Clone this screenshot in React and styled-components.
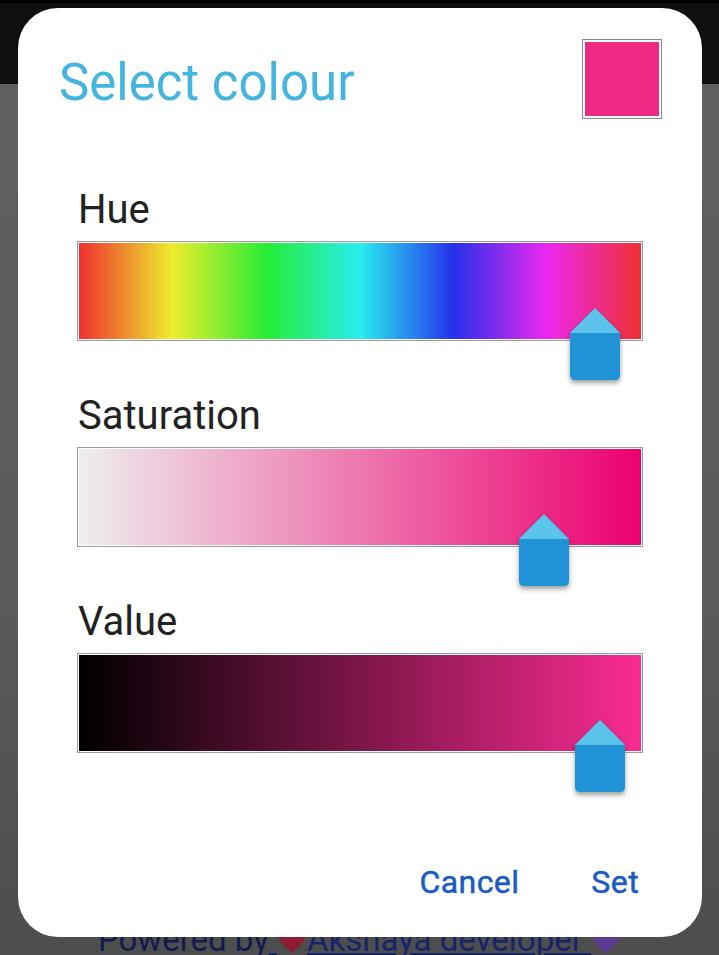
import React from "react";
import styled, { createGlobalStyle } from "styled-components";

const Global = createGlobalStyle`
  html, body { margin: 0; padding: 0; }
  body { font-family: Roboto, "Noto Sans", Arial, sans-serif; overflow: hidden; }
`;

const Page = styled.div`
  position: relative;
  width: 719px;
  height: 955px;
  display: flex;
  flex-direction: column;
  overflow: hidden;
`;

const AppBar = styled.div`
  height: 81px;
  background: #0f0f11;
  border-top: 3px solid #000;
`;

const Body = styled.div`
  flex: 1;
  display: flex;
  flex-direction: column;
  justify-content: flex-end;
  align-items: center;
  background: linear-gradient(180deg, #606060 0%, #5a5a5a 60%, #4d4d4d 100%);
`;

const Footer = styled.div`
  font-family: Roboto, sans-serif;
  font-size: 33px;
  line-height: 30px;
  color: #141a4c;
  white-space: pre;
  display: flex;
  align-items: baseline;
`;

const FooterLink = styled.span`
  color: #18246a;
  text-decoration: underline;
  white-space: pre;
`;

const HeartIcon = styled.svg`
  width: 30px;
  height: 27px;
  vertical-align: -3px;
`;

const Dialog = styled.div`
  position: absolute;
  top: 8px;
  left: 18px;
  width: 684px;
  height: 929px;
  background: #fff;
  border-radius: 40px;
  display: flex;
  flex-direction: column;
  box-sizing: border-box;
`;

const Header = styled.div`
  display: flex;
  justify-content: space-between;
  align-items: flex-start;
  padding: 31px 40px 0 41px;
`;

const Title = styled.h1`
  margin: 14px 0 0 0;
  font-family: Roboto, sans-serif;
  font-weight: 400;
  font-size: 51px;
  line-height: 60px;
  color: #44b5e0;
`;

const Swatch = styled.div`
  width: 80px;
  height: 80px;
  box-sizing: border-box;
  border: 1px solid #8a8a8a;
  padding: 2px;
  background: #fff;
  & > div {
    width: 100%;
    height: 100%;
    background: ${(p) => p.$color};
  }
`;

const Sliders = styled.div`
  display: flex;
  flex-direction: column;
  gap: 53px;
  padding: 69px 59px 0 59px;
`;

const SliderBlock = styled.div`
  display: flex;
  flex-direction: column;
  gap: 9px;
`;

const Label = styled.div`
  font-family: Roboto, sans-serif;
  font-size: 40px;
  line-height: 44px;
  color: #222;
  padding-left: 1px;
`;

const Bar = styled.div`
  position: relative;
  height: 100px;
  box-sizing: border-box;
  border: 1px solid #9c9c9c;
  padding: 1px;
  background: #fff;
`;

const Track = styled.div`
  width: 100%;
  height: 100%;
  background: ${(p) => p.$gradient};
`;

const Thumb = styled.svg`
  position: absolute;
  top: 66px;
  width: 50px;
  height: 72px;
  margin-left: -25px;
  overflow: visible;
  filter: drop-shadow(0 3px 2.5px rgba(0, 0, 0, 0.38));
`;

const Actions = styled.div`
  margin-top: auto;
  display: flex;
  justify-content: flex-end;
  gap: 72px;
  padding: 0 63px 35px 0;
`;

const ActionButton = styled.button`
  border: none;
  background: none;
  padding: 0;
  font-family: Roboto, sans-serif;
  font-weight: 400;
  font-size: 32px;
  line-height: 40px;
  letter-spacing: 0.4px;
  color: #1b5bc6;
  -webkit-text-stroke: 0.5px #1b5bc6;
  cursor: pointer;
`;

const Heart = ({ color }) => (
  <HeartIcon viewBox="0 0 24 22">
    <path
      d="M12 21 C5 15 1 11.5 1 7 C1 3.5 3.7 1 7 1 C9 1 11 2 12 4 C13 2 15 1 17 1 C20.3 1 23 3.5 23 7 C23 11.5 19 15 12 21 Z"
      fill={color}
    />
  </HeartIcon>
);

const ThumbShape = ({ pos }) => (
  <Thumb viewBox="0 0 50 72" style={{ left: `${pos * 100}%` }}>
    <defs>
      <linearGradient id="tb" x1="0" y1="0" x2="0" y2="1">
        <stop offset="0" stopColor="#1b85c8" />
        <stop offset="0.08" stopColor="#1f93d6" />
        <stop offset="1" stopColor="#1f93d6" />
      </linearGradient>
    </defs>
    <path d="M25 0 L50 25 L50 67 Q50 72 45 72 L5 72 Q0 72 0 67 L0 25 Z" fill="url(#tb)" />
    <path d="M25 0 L50 25 L0 25 Z" fill="#5cc4ea" />
  </Thumb>
);

const sliders = [
  {
    label: "Hue",
    pos: 0.917,
    gradient:
      "linear-gradient(90deg, #ee3030 0%, #eeee2e 16.67%, #26ec36 33.33%, #28eeee 50%, #2630ea 66.67%, #ec28ee 83.33%, #ee3030 100%)",
  },
  {
    label: "Saturation",
    pos: 0.827,
    gradient: "linear-gradient(90deg, #eeeeee 0%, #ec0070 100%)",
  },
  {
    label: "Value",
    pos: 0.926,
    gradient: "linear-gradient(90deg, #000000 0%, #fa2c92 100%)",
  },
];

export default function App() {
  return (
    <>
      <Global />
      <Page>
        <AppBar />
        <Body>
          <Footer>
            Powered by
            <FooterLink>
              {" "}
              <Heart color="#8e1c30" />
              {"Akshaya developer "}
              <Heart color="#5b3c95" />
            </FooterLink>
          </Footer>
        </Body>
        <Dialog>
          <Header>
            <Title>Select colour</Title>
            <Swatch $color="#ee2a85">
              <div />
            </Swatch>
          </Header>
          <Sliders>
            {sliders.map((s) => (
              <SliderBlock key={s.label}>
                <Label>{s.label}</Label>
                <Bar>
                  <Track $gradient={s.gradient} />
                  <ThumbShape pos={s.pos} />
                </Bar>
              </SliderBlock>
            ))}
          </Sliders>
          <Actions>
            <ActionButton>Cancel</ActionButton>
            <ActionButton>Set</ActionButton>
          </Actions>
        </Dialog>
      </Page>
    </>
  );
}
